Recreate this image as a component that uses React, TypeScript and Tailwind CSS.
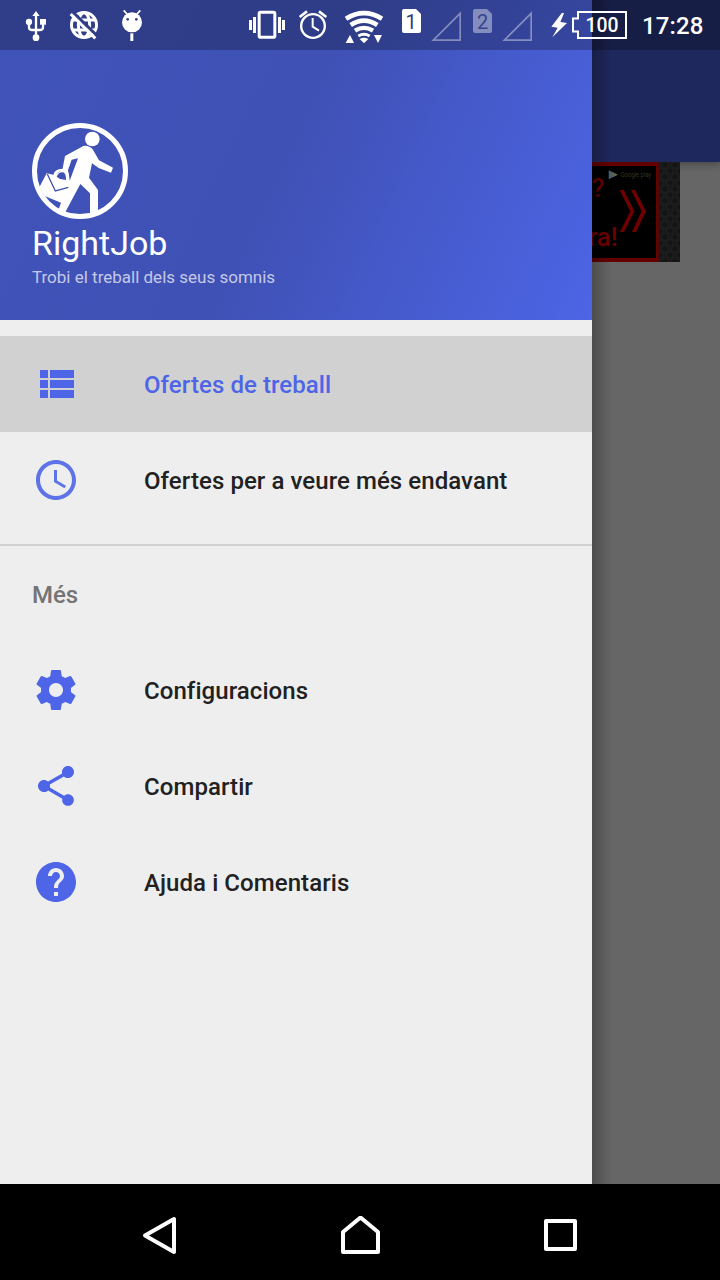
import type { ReactNode } from "react";

const ACCENT = "#4d65e6";

function StatusBar() {
  return (
    <div className="absolute inset-x-0 top-0 z-20 flex h-[50px] items-start bg-black/25 text-white">
      <svg className="ml-6 h-[50px] w-6 shrink-0" viewBox="72 0 72 150" fill="none" stroke="#fff" strokeWidth="7">
        <path d="M108 44V112M87 68V82Q87 90 95 90H121Q129 90 129 82V68" />
        <path d="M108 33L119 48H97Z" fill="#fff" stroke="none" />
        <circle cx="87" cy="66" r="9.500" fill="#fff" stroke="none" />
        <rect x="120" y="57" width="18" height="17" fill="#fff" stroke="none" />
        <circle cx="108" cy="113" r="10" fill="#fff" stroke="none" />
      </svg>
      <svg className="ml-5 h-[50px] w-8 shrink-0" viewBox="204 0 96 150" fill="none" stroke="#fff" strokeWidth="9">
        <circle cx="252" cy="75" r="37.500" />
        <ellipse cx="252" cy="75" rx="17" ry="37" />
        <path d="M217 60H287M217 90H287" />
        <path d="M217 35L293 109" stroke="#303d87" strokeWidth="9" />
        <path d="M212 42L286 115" strokeWidth="9" />
      </svg>
      <svg className="ml-5 h-[50px] w-6 shrink-0" viewBox="360 0 72 150" fill="#fff">
        <circle cx="396" cy="67" r="30" />
        <path d="M371 31L382 43M421 31L410 43" stroke="#fff" strokeWidth="5" />
        <circle cx="383" cy="58" r="4" fill="#303d87" />
        <circle cx="409" cy="58" r="4" fill="#303d87" />
        <rect x="391" y="100" width="9" height="23" />
      </svg>
      <svg className="ml-[104px] h-[50px] w-[38px] shrink-0" viewBox="24 0 114 150" fill="#fff">
        <rect x="57.500" y="37" width="47" height="75" rx="4" fill="none" stroke="#fff" strokeWidth="9" />
        <path d="M27 60h9v30h-9zM39 51h9v48h-9zM114 51h9v48h-9zM126 60h9v30h-9z" />
      </svg>
      <svg className="ml-3 h-[50px] w-[30px] shrink-0" viewBox="174 0 90 150" fill="none" stroke="#fff" strokeWidth="7">
        <circle cx="219" cy="78" r="35.500" />
        <path d="M179 51L201 34M259 51L237 34" strokeWidth="8" />
        <path d="M218 54V80L237 92" strokeWidth="6" />
      </svg>
      <svg className="ml-4 h-[50px] w-10 shrink-0" viewBox="312 0 120 150" fill="none" stroke="#fff" strokeWidth="14">
        <path d="M318 56Q372 23 426 56" />
        <path d="M332 75Q372 49 412 75" />
        <path d="M345 92Q372 75 399 92" strokeWidth="13" />
        <path d="M355 108Q372 98 389 108" strokeWidth="9" />
        <path d="M359 117Q372 109 385 117L372 130ZM317 129L330 105L342 129ZM402 105H426L414 129Z" fill="#fff" stroke="none" />
      </svg>
      <svg className="ml-[17px] h-[50px] w-[21px] shrink-0" viewBox="0 0 21 50">
        <path d="M3 9H15L20 14V31Q20 33 18 33H3Q1 33 1 31V11Q1 9 3 9Z" fill="#fff" />
        <text x="10" y="29" textAnchor="middle" fill="#303d87" fontSize="20" fontFamily="Roboto, sans-serif">1</text>
      </svg>
      <svg className="ml-[9px] h-[50px] w-[31px] shrink-0 opacity-40" viewBox="573 0 93 150" fill="none" stroke="#fff" strokeWidth="5">
        <path d="M580 120.500H660.500V40Z" />
      </svg>
      <svg className="ml-[10px] h-[50px] w-[21px] shrink-0" viewBox="0 0 21 50">
        <path d="M3 9H15L20 14V31Q20 33 18 33H3Q1 33 1 31V11Q1 9 3 9Z" fill="#fff" fillOpacity=".4" />
        <text x="10.500" y="28.500" textAnchor="middle" fill="#36448f" fontSize="20" fontFamily="Roboto, sans-serif">2</text>
      </svg>
      <svg className="ml-[9px] h-[50px] w-[31px] shrink-0 opacity-40" viewBox="573 0 93 150" fill="none" stroke="#fff" strokeWidth="5">
        <path d="M580 120.500H660.500V40Z" />
      </svg>
      <svg className="ml-[17px] h-[50px] w-[18px] shrink-0" viewBox="210 0 54 150" fill="#fff">
        <path d="M246 38L214 80L233 83L217 112L261 69L241 66L252 40Z" />
      </svg>
      <svg className="ml-[3px] h-[50px] w-[57px] shrink-0" viewBox="571 0 57 50" fill="none">
        <path d="M578 12H626V38H578V31.500H573V18.500H578Z" stroke="#fff" strokeWidth="2" />
        <text x="602" y="32" textAnchor="middle" fill="#fff" fontSize="20" fontFamily="Roboto, sans-serif" fontWeight="500" textLength="33" lengthAdjust="spacingAndGlyphs">100</text>
      </svg>
      <span className="ml-[14px] mt-[1px] text-[24px] leading-[50px] font-medium tracking-[0.1px]">17:28</span>
    </div>
  );
}

function Logo() {
  return (
    <svg className="size-24" viewBox="36 39 288 288" fill="#fff">
      <circle cx="180" cy="183" r="136.500" fill="none" stroke="#fff" strokeWidth="15" />
      <circle cx="217" cy="87" r="22" />
      <path d="M190 108Q207 105 218 118L237 151L279 173L273 188L236 174L216 160L207 203L234 240V312H210V250L181 222L135 308L116 298L123 278L74 258L58 232L80 190L103 195L127 180L135 138Z" />
      <path d="M174 145L155 149L144 180L149 212Z" fill="#3f51b5" />
      <path d="M104 196Q106 181 128 180Q147 182 143 216" fill="none" stroke="#fff" strokeWidth="8" />
      <path d="M110 200Q117 184 130 187Q139 193 138 210L120 207Z" fill="#3f51b5" />
      <path d="M82 192L106 243L145 232" fill="none" stroke="#3f51b5" strokeWidth="4" />
    </svg>
  );
}

function Item({ label, selected = false, children }: { label: string; selected?: boolean; children: ReactNode }) {
  return (
    <li className={selected ? "flex h-24 items-center gap-16 bg-[#d1d1d1] px-8 text-[#4d65e6]" : "flex h-24 items-center gap-16 px-8 text-[#212121]"}>
      <svg className="size-12 shrink-0" viewBox="0 0 24 24" fill={ACCENT}>{children}</svg>
      <span className="pt-[2px] text-[24px] font-medium tracking-[0.07px] whitespace-nowrap">{label}</span>
    </li>
  );
}

function Drawer() {
  return (
    <aside className="absolute inset-y-0 left-0 z-10 flex w-[592px] flex-col bg-[#eee]">
      <header className="flex h-80 shrink-0 flex-col bg-[linear-gradient(115deg,#4053b9_0%,#3f51b5_48%,#4d65e6_100%)] px-8 pt-[123px] text-white">
        <Logo />
        <h1 className="mt-1 text-[34px] leading-10">RightJob</h1>
        <p className="mt-[2px] text-[17px] leading-6 text-white/70">Trobi el treball dels seus somnis</p>
      </header>
      <ul className="pt-4">
        <Item label="Ofertes de treball" selected>
          <path d="M4 14h4v-4H4v4zm0 5h4v-4H4v4zM4 9h4V5H4v4zm5 5h12v-4H9v4zm0 5h12v-4H9v4zM9 5v4h12V5H9z" />
        </Item>
        <Item label="Ofertes per a veure més endavant">
          <g fillOpacity=".9">
            <path d="M11.990 2C6.470 2 2 6.480 2 12s4.470 10 9.990 10C17.520 22 22 17.520 22 12S17.520 2 11.990 2zM12 20c-4.420 0-8-3.580-8-8s3.580-8 8-8 8 3.580 8 8-3.580 8-8 8z" />
            <path d="M12.500 7H11v6l5.250 3.150.75-1.230-4.500-2.670z" />
          </g>
        </Item>
      </ul>
      <div className="mt-4 h-[2px] shrink-0 bg-[#d0d0d0]" />
      <h2 className="flex h-24 items-center px-8 pt-[2px] text-[24px] font-medium text-[#747474]">Més</h2>
      <ul>
        <Item label="Configuracions">
          <path d="M19.430 12.980c.04-.32.07-.64.07-.98s-.03-.66-.07-.98l2.110-1.650c.19-.15.24-.42.12-.64l-2-3.460c-.12-.22-.39-.3-.61-.22l-2.490 1c-.52-.4-1.080-.73-1.690-.98l-.38-2.650C14.460 2.180 14.250 2 14 2h-4c-.25 0-.46.18-.49.42l-.38 2.650c-.61.25-1.170.59-1.690.98l-2.490-1c-.23-.09-.49 0-.61.22l-2 3.460c-.13.22-.07.49.12.64l2.110 1.650c-.04.32-.07.65-.07.98s.03.66.07.98l-2.110 1.650c-.19.15-.24.42-.12.64l2 3.460c.12.22.39.3.61.22l2.490-1c.52.4 1.080.73 1.690.98l.38 2.650c.03.24.24.42.49.42h4c.25 0 .46-.18.49-.42l.38-2.650c.61-.25 1.170-.59 1.690-.98l2.490 1c.23.09.49 0 .61-.22l2-3.460c.12-.22.07-.49-.12-.64l-2.110-1.650zM12 15.500c-1.930 0-3.500-1.570-3.500-3.500s1.570-3.500 3.500-3.500 3.500 1.570 3.500 3.500-1.570 3.500-3.500 3.500z" />
        </Item>
        <Item label="Compartir">
          <path d="M18 16.080c-.76 0-1.440.3-1.960.77L8.910 12.700c.05-.23.09-.46.09-.7s-.04-.47-.09-.7l7.050-4.110c.54.5 1.250.81 2.040.81 1.660 0 3-1.340 3-3s-1.340-3-3-3-3 1.340-3 3c0 .24.04.47.09.7L8.040 9.810C7.500 9.310 6.790 9 6 9c-1.660 0-3 1.340-3 3s1.340 3 3 3c.79 0 1.500-.31 2.040-.81l7.120 4.160c-.05.21-.08.43-.08.65 0 1.610 1.310 2.920 2.920 2.920 1.610 0 2.920-1.310 2.920-2.920s-1.310-2.920-2.920-2.920z" />
        </Item>
        <Item label="Ajuda i Comentaris">
          <path d="M12 2C6.480 2 2 6.480 2 12s4.480 10 10 10 10-4.480 10-10S17.520 2 12 2zm1 17h-2v-2h2v2zm2.070-7.750l-.9.920C13.450 12.900 13 13.500 13 15h-2v-.5c0-1.100.45-2.100 1.170-2.830l1.240-1.260c.37-.36.59-.86.59-1.410 0-1.100-.9-2-2-2s-2 .9-2 2H8c0-2.210 1.790-4 4-4s4 1.790 4 4c0 .88-.36 1.680-.93 2.250z" />
        </Item>
      </ul>
    </aside>
  );
}

function DimmedPage() {
  return (
    <div className="flex h-full flex-col bg-[#666]">
      <div className="z-[1] h-[162px] shrink-0 bg-[#1f285d] shadow-[0_2px_8px_rgba(0,0,0,0.35)]" />
      <svg className="z-[2] ml-[572px] h-[100px] w-[108px] shrink-0" viewBox="6 66 324 300">
        <defs>
          <pattern id="mesh" x="270" y="66" width="30" height="36" patternUnits="userSpaceOnUse">
            <rect width="30" height="36" fill="#191919" />
            <circle cx="15" cy="9" r="10" fill="#141414" stroke="#1f1f1f" strokeWidth="3" />
            <circle cx="0" cy="27" r="10" fill="#141414" stroke="#1f1f1f" strokeWidth="3" />
            <circle cx="30" cy="27" r="10" fill="#141414" stroke="#1f1f1f" strokeWidth="3" />
          </pattern>
        </defs>
        <rect x="6" y="66" width="324" height="300" fill="url(#mesh)" />
        <rect x="6" y="66" width="264" height="300" fill="#650000" />
        <rect x="6" y="78" width="252" height="276" fill="#000" />
        <rect x="264" y="66" width="6" height="300" fill="#4a0808" />
        <path d="M149 150H161L193 214L162 276H150L181 214ZM183 150H195L228 214L198 276H186L215 214Z" fill="#700000" />
        <path d="M116 91L143 104L116 118Z" fill="#49616b" />
        <path d="M128 97L143 104L129 111Z" fill="#696438" />
        <text x="153" y="110" textLength="90" lengthAdjust="spacingAndGlyphs" fill="#34371f" fontSize="20" fontFamily="Roboto, sans-serif">Google play</text>
        <text x="65" y="172" fill="#650000" fontSize="78" fontWeight="500" fontFamily="Roboto, sans-serif">?</text>
        <text x="143" y="318" textAnchor="end" fill="#700000" fontSize="78" fontWeight="500" fontFamily="Roboto, sans-serif">ra!</text>
      </svg>
    </div>
  );
}

export default function App() {
  return (
    <div className="flex h-[1280px] w-[720px] flex-col overflow-hidden bg-black font-['Roboto',sans-serif]">
      <main className="relative h-[1184px] shrink-0 overflow-hidden">
        <DimmedPage />
        <div className="absolute inset-y-0 left-[592px] z-[5] w-5 bg-linear-to-r from-black/25 to-transparent" />
        <Drawer />
        <StatusBar />
      </main>
      <nav className="flex h-24 shrink-0 items-center justify-between px-[140px] pt-2">
        <svg className="size-10" viewBox="0 0 40 40" fill="none" stroke="#fff" strokeWidth="4" strokeLinejoin="round">
          <path d="M5 19.500L34 3V36Z" />
        </svg>
        <svg className="size-10" viewBox="0 0 40 40" fill="none" stroke="#fff" strokeWidth="4" strokeLinejoin="round">
          <path d="M3 36V16L20.500 1.500L38 16V36Z" />
        </svg>
        <svg className="size-10" viewBox="0 0 40 40" fill="none" stroke="#fff" strokeWidth="4" strokeLinejoin="round">
          <path d="M6 5H35V33H6Z" />
        </svg>
      </nav>
    </div>
  );
}
